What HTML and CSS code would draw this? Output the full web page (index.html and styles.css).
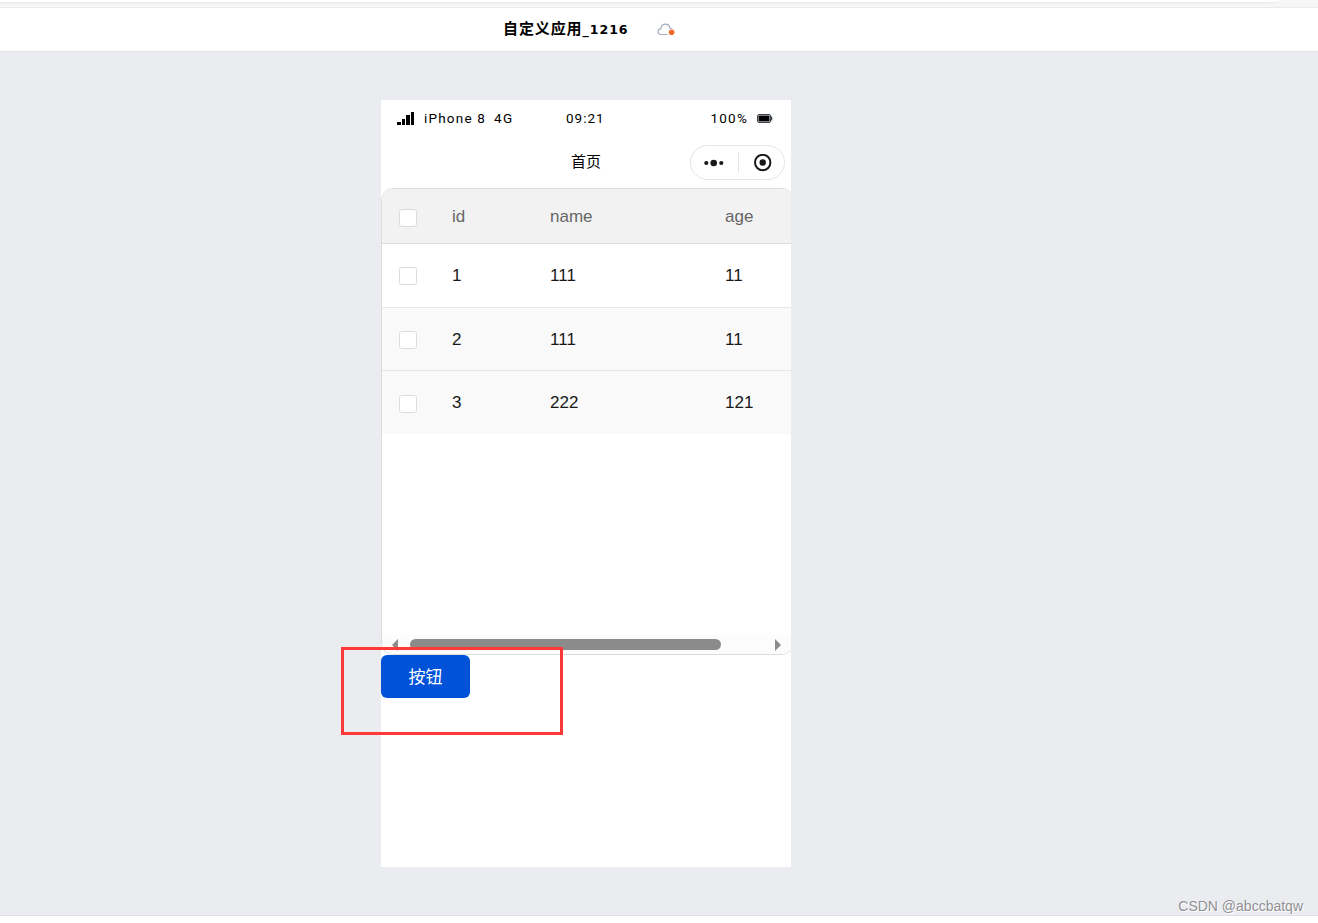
FILE: index.html
```html
<!DOCTYPE html>
<html lang="zh-CN">
<head>
  <meta charset="UTF-8">
  <meta name="viewport" content="width=device-width, initial-scale=1">
  <title>自定义应用_1216</title>
  <link rel="stylesheet" href="styles.css">
</head>
<body>
  <div class="browser-edge"><div class="address-bar"></div></div>
  <header class="app-header">
    <span class="app-title">自定义应用<span class="app-number">_1216</span></span>
    <svg class="cloud" width="20" height="14" viewBox="0 0 20 14">
      <path d="M10.500 11.500H4.400C2.400 11.500 1.100 10.200 1.100 8.600 1.100 7 2.300 5.900 3.800 5.800 4.200 3 6 1.200 8.400 1.200c2.500 0 4.200 1.700 4.600 4 1 .1 1.800.500 2.200 1" fill="none" stroke="#a3adbf" stroke-width="1.200"/>
      <circle cx="14.600" cy="9.200" r="2.800" fill="#ed6a2c"/>
    </svg>
  </header>

  <main class="canvas">
    <div class="phone">
      <div class="status-bar">
        <div class="carrier">
          <svg width="18" height="14" viewBox="0 0 18 14" shape-rendering="crispEdges">
            <path d="M0 10h4v3H0zM5 7h3v6H5zM9 3h4v10H9zM14 0h3v13h-3z"/>
          </svg>
          <span class="device">iPhone 8</span>
          <span class="network">4G</span>
        </div>
        <span class="time">09:21</span>
        <div class="battery">
          <span class="level">100%</span>
          <svg width="16" height="9" viewBox="0 0 16 9">
            <rect x=".5" y=".5" width="13" height="8" rx="1.500" fill="#fff" stroke="#3b4650"/>
            <rect x="1.500" y="1.500" width="11" height="6"/>
            <path d="M14.500 2.500v4" stroke="#3b4650" stroke-width="1.500"/>
          </svg>
        </div>
      </div>

      <div class="nav-bar">
        <span class="nav-title">首页</span>
        <div class="capsule">
          <svg width="20" height="8" viewBox="0 0 20 8" fill="#191919">
            <circle cx="2.300" cy="4" r="2.100"/>
            <circle cx="9.700" cy="4" r="3.300"/>
            <circle cx="17.300" cy="4" r="2.100"/>
          </svg>
          <span class="divider"></span>
          <svg width="18" height="18" viewBox="0 0 18 18">
            <circle cx="8.700" cy="8.500" r="7.700" fill="none" stroke="#191919" stroke-width="2"/>
            <circle cx="8.700" cy="8.500" r="3.200" fill="#191919"/>
          </svg>
        </div>
      </div>

      <div class="table-view">
        <div class="table">
          <div class="row head"><i class="checkbox"></i><span>id</span><span>name</span><span>age</span></div>
          <div class="row"><i class="checkbox"></i><span>1</span><span>111</span><span>11</span></div>
          <div class="row striped"><i class="checkbox"></i><span>2</span><span>111</span><span>11</span></div>
          <div class="row striped last"><i class="checkbox"></i><span>3</span><span>222</span><span>121</span></div>
          <div class="scrollbar">
            <svg width="6" height="12" viewBox="0 0 6 12"><path d="M6 0v12L0 6z"/></svg>
            <div class="thumb"></div>
            <svg width="6" height="12" viewBox="0 0 6 12"><path d="M0 0v12l6-6z"/></svg>
          </div>
        </div>
      </div>

      <button class="primary-button">按钮</button>
      <div class="highlight"></div>
    </div>
    <span class="watermark">CSDN @abccbatqw</span>
  </main>
</body>
</html>
```
FILE: styles.css
```css
* {
  box-sizing: border-box;
}
body {
  margin: 0;
  height: 923px;
  overflow: hidden;
  background: #fff;
  color: #000;
  font-family: "Liberation Sans", "Noto Sans CJK SC", sans-serif;
}
svg {
  display: block;
  flex: none;
}

/* bottom edge of the browser toolbar */
.browser-edge {
  height: 8px;
  background: #f6f6f6;
  border-bottom: 1px solid #ebebeb;
}
.address-bar {
  width: 1281px;
  height: 4px;
  background: #fff;
  border-bottom: 2px solid #efefef;
  border-bottom-right-radius: 12px 4px;
}
.app-header {
  height: 44px;
  display: flex;
  align-items: center;
  padding-left: 503px;
  border-bottom: 1px solid #e3e4e8;
}
.app-title {
  width: 154px;
  font-size: 15px;
  font-weight: bold;
  letter-spacing: 0.9px;
  line-height: 20px;
  white-space: nowrap;
}
.app-number {
  font-family: "DejaVu Sans", sans-serif;
  font-size: 12.5px;
  letter-spacing: 1px;
}

/* design canvas */
.canvas {
  position: relative;
  height: 864px;
  padding: 48px 0 0 381px;
  background: #ebecf0;
  border-bottom: 1px solid #e0e1e5;
}
.phone {
  position: relative;
  width: 410px;
  height: 767px;
  background: #fff;
}
.status-bar {
  height: 37px;
  display: grid;
  grid-template-columns: 1fr 38px 1fr;
  align-items: center;
  padding: 0 18px 0 16px;
  font-family: Roboto, "Liberation Sans", sans-serif;
  font-size: 13.5px;
  letter-spacing: 1.2px;
}
.carrier,
.battery {
  display: flex;
  align-items: center;
}
.device,
.network,
.time,
.level {
  padding-bottom: 2px;
}
.device {
  margin: 0 8px 0 9px;
}
.time {
  letter-spacing: 1px;
}
.battery {
  justify-content: flex-end;
  gap: 9px;
}
.nav-bar {
  height: 51px;
  display: grid;
  grid-template-columns: 1fr auto 1fr;
  align-items: center;
  padding-right: 6px;
}
.nav-title {
  grid-column: 2;
  padding: 0 0 4px 6px;
  font-size: 15px;
}
.capsule {
  width: 95px;
  height: 35px;
  justify-self: end;
  display: flex;
  align-items: center;
  padding-left: 13px;
  border: 1px solid #e4e4ec;
  border-radius: 18px;
}
.divider {
  width: 1px;
  height: 21px;
  margin: 0 15px 0 14px;
  background: #e4e4ec;
}

/* data table, slightly wider than the screen it sits in */
.table-view {
  height: 467px;
  overflow: hidden;
}
.table {
  width: 413px;
  height: 467px;
  display: flex;
  flex-direction: column;
  border: 1px solid #dcdcdc;
  border-radius: 12px;
  overflow: hidden;
}
.row {
  height: 64px;
  flex: none;
  display: grid;
  grid-template-columns: 53px 98px 175px 1fr;
  align-items: center;
  padding-left: 17px;
  border-bottom: 1px solid #e7e7e7;
  font-size: 17px;
  color: #181818;
}
.row.head {
  height: 55px;
  padding-top: 1px;
  background: #f2f2f2;
  border-color: #dcdcdc;
  color: #666;
}
.row.striped {
  height: 63px;
  padding-top: 1px;
  background: #f9f9f9;
}
.row.last {
  padding-top: 0;
  border-bottom: 0;
}
.checkbox {
  width: 18px;
  height: 18px;
  margin-top: 1px;
  border: 1px solid #dcdcdc;
  border-radius: 3px;
  background: #fff;
}
.row.head .checkbox,
.row.last .checkbox {
  margin-top: 2px;
}
.scrollbar {
  height: 19px;
  margin-top: auto;
  display: flex;
  align-items: center;
  padding: 0 12px 0 10px;
  background: #fcfcfc;
  fill: #8b8b8b;
}
.thumb {
  width: 311px;
  height: 11px;
  margin: 0 auto 0 12px;
  border-radius: 6px;
  background: #8b8b8b;
}

.primary-button {
  display: block;
  width: 89px;
  height: 43px;
  padding: 0 0 2px;
  border: 0;
  border-radius: 6px;
  background: #0052d9;
  color: #fff;
  font: 17px "Liberation Sans", "Noto Sans CJK SC", sans-serif;
}
.highlight {
  position: absolute;
  left: -40px;
  top: 547px;
  width: 222px;
  height: 88px;
  border: 3px solid #ff3838;
}
.watermark {
  position: absolute;
  right: 15px;
  bottom: 1px;
  font-size: 14px;
  line-height: 16px;
  color: #8f9094;
  text-shadow: 1px 1px #fff;
}
```
